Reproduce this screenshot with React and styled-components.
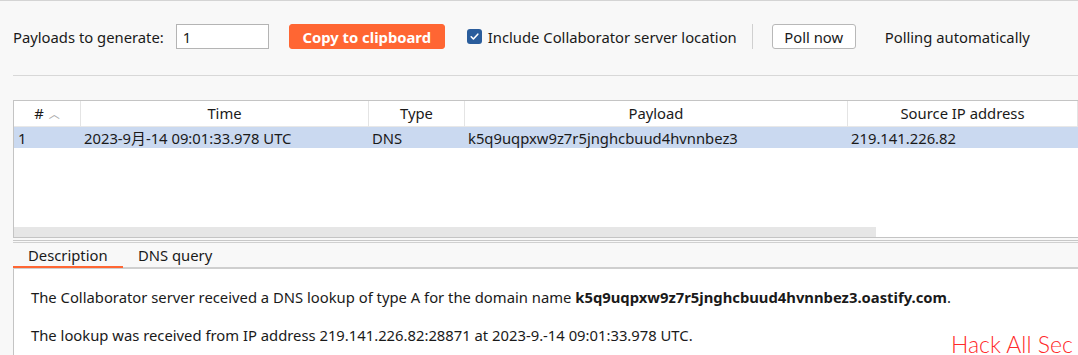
import styled, { createGlobalStyle } from 'styled-components';

const GlobalStyle = createGlobalStyle`
    html, body {
        margin: 0;
        padding: 0;
        background: #f8f8f8;
    }
    body {
        font-family: "Noto Sans", "Noto Sans CJK SC", sans-serif;
        font-size: 14.8px;
        color: #1a1a1a;
    }
`;

const Page = styled.div`
    position: relative;
    width: 1078px;
    height: 355px;
    overflow: hidden;
    background: #f8f8f8;
    border-top: 1px solid #d4d4d4;
    box-sizing: border-box;
`;

const Toolbar = styled.div`
    display: flex;
    align-items: center;
    height: 75px;
    padding-bottom: 3px;
    box-sizing: border-box;
    border-bottom: 1px solid #d8d8d8;
    margin-left: 13px;
    white-space: nowrap;
`;

const Label = styled.span`
    margin-right: ${p => p.gap || 0}px;
`;

const NumberInput = styled.div`
    width: 93px;
    height: 25px;
    box-sizing: border-box;
    border: 1px solid #b4b4b4;
    background: #fff;
    padding-left: 6px;
    display: flex;
    align-items: center;
    margin-right: 20px;
`;

const Button = styled.button`
    height: 25px;
    box-sizing: border-box;
    padding: 0;
    border-radius: 3px;
    font-family: inherit;
    font-size: 14.8px;
    border: 1px solid ${p => (p.primary ? '#ff6633' : '#b8b8b8')};
    background: ${p => (p.primary ? '#ff6633' : '#fff')};
    color: ${p => (p.primary ? '#fff' : '#1a1a1a')};
    font-weight: ${p => (p.primary ? 700 : 400)};
    margin-right: ${p => p.gap || 0}px;
    width: ${p => p.w}px;
    display: flex;
    align-items: center;
    justify-content: center;
`;

const Check = styled.span`
    width: 15px;
    height: 15px;
    border-radius: 3px;
    background: #2a5d9c;
    display: inline-flex;
    align-items: center;
    justify-content: center;
    margin-right: 6px;
`;

const VSep = styled.span`
    width: 1px;
    height: 25px;
    background: #d0d0d0;
    margin: 0 19px 0 15px;
`;

const TablePanel = styled.div`
    margin: 24px 0 0 13px;
    height: 136px;
    background: #fff;
    border-left: 1px solid #c4c4c4;
    border-top: 1px solid #c4c4c4;
    border-bottom: 1px solid #c4c4c4;
    display: flex;
    flex-direction: column;
`;

const Row = styled.div`
    display: grid;
    grid-template-columns: 67px 288px 96px 383px 1fr;
    height: ${p => p.h}px;
    align-items: center;
    background: ${p => (p.selected ? '#cad9f0' : '#fff')};
`;

const HeadCell = styled.div`
    height: 100%;
    display: flex;
    align-items: center;
    justify-content: center;
    border-right: 1px solid #e4e4e4;
    border-bottom: 1px solid #e8e8e8;
    box-sizing: border-box;
    padding-bottom: 1px;
`;

const SortArrow = styled.span`
    color: #a8a8a8;
    font-size: 11px;
    margin-left: 5px;
`;

const Cell = styled.div`
    padding-left: ${p => p.pad || 3}px;
    white-space: nowrap;
`;

const TableBody = styled.div`
    flex: 1;
`;

const Scrollbar = styled.div`
    height: 10px;
    display: flex;
`;

const ScrollThumb = styled.div`
    width: 862px;
    background: #e6e6e6;
`;

const Divider = styled.div`
    margin-left: 13px;
    height: 2px;
    border-bottom: 1px solid #c8c8c8;
    margin-bottom: 1px;
`;

const Tabs = styled.div`
    margin-left: 13px;
    height: 27px;
    display: flex;
    align-items: stretch;
    border-bottom: 2px solid #cfcfcf;
    border-top: 1px solid #d0d0d0;
    box-sizing: border-box;
`;

const Tab = styled.div`
    padding: 0 14px 0 ${p => p.left || 15}px;
    width: ${p => p.w}px;
    box-sizing: border-box;
    display: flex;
    align-items: center;
    border-bottom: 2px solid ${p => (p.active ? '#ff6633' : 'transparent')};
    margin-bottom: -1px;
`;

const Content = styled.div`
    margin-left: 13px;
    height: 90px;
    background: #fff;
    border-left: 1px solid #c4c4c4;
    padding: 18px 0 0 17px;
    box-sizing: border-box;
`;

const Para = styled.p`
    margin: 0 0 17px 0;
    white-space: nowrap;
    line-height: 21px;
`;

const Watermark = styled.div`
    position: absolute;
    left: 951px;
    top: 332px;
    font-family: "Lato", "Liberation Sans", sans-serif;
    font-size: 23px;
    line-height: 23px;
    font-weight: 300;
    color: #ff2a2a;
    white-space: nowrap;
`;

function App() {
    return (
        <Page>
            <GlobalStyle />
            <Toolbar>
                <Label gap={12}>Payloads to generate:</Label>
                <NumberInput>1</NumberInput>
                <Button primary w={156} gap={22}>Copy to clipboard</Button>
                <Check>
                    <svg width="11" height="11" viewBox="0 0 11 11">
                        <path d="M2.2 5.8 L4.4 8 L8.8 3.2" stroke="#fff" strokeWidth="1.6" fill="none" strokeLinecap="round" strokeLinejoin="round" />
                    </svg>
                </Check>
                <Label>Include Collaborator server location</Label>
                <VSep />
                <Button w={84} gap={29}>Poll now</Button>
                <Label>Polling automatically</Label>
            </Toolbar>

            <TablePanel>
                <Row h={26}>
                    <HeadCell>#<SortArrow>︿</SortArrow></HeadCell>
                    <HeadCell>Time</HeadCell>
                    <HeadCell>Type</HeadCell>
                    <HeadCell>Payload</HeadCell>
                    <HeadCell>Source IP address</HeadCell>
                </Row>
                <Row h={21} selected>
                    <Cell pad={4}>1</Cell>
                    <Cell>2023-9月-14 09:01:33.978 UTC</Cell>
                    <Cell>DNS</Cell>
                    <Cell>k5q9uqpxw9z7r5jnghcbuud4hvnnbez3</Cell>
                    <Cell>219.141.226.82</Cell>
                </Row>
                <TableBody />
                <Scrollbar>
                    <ScrollThumb />
                </Scrollbar>
            </TablePanel>

            <Divider />
            <Tabs>
                <Tab active w={110} left={15}>Description</Tab>
                <Tab>DNS query</Tab>
            </Tabs>
            <Content>
                <Para>
                    The Collaborator server received a DNS lookup of type A for the domain name{' '}
                    <b>k5q9uqpxw9z7r5jnghcbuud4hvnnbez3.oastify.com</b>.
                </Para>
                <Para>
                    The lookup was received from IP address 219.141.226.82:28871 at 2023-9.-14 09:01:33.978 UTC.
                </Para>
            </Content>
            <Watermark>Hack All Sec</Watermark>
        </Page>
    );
}

export default App;
